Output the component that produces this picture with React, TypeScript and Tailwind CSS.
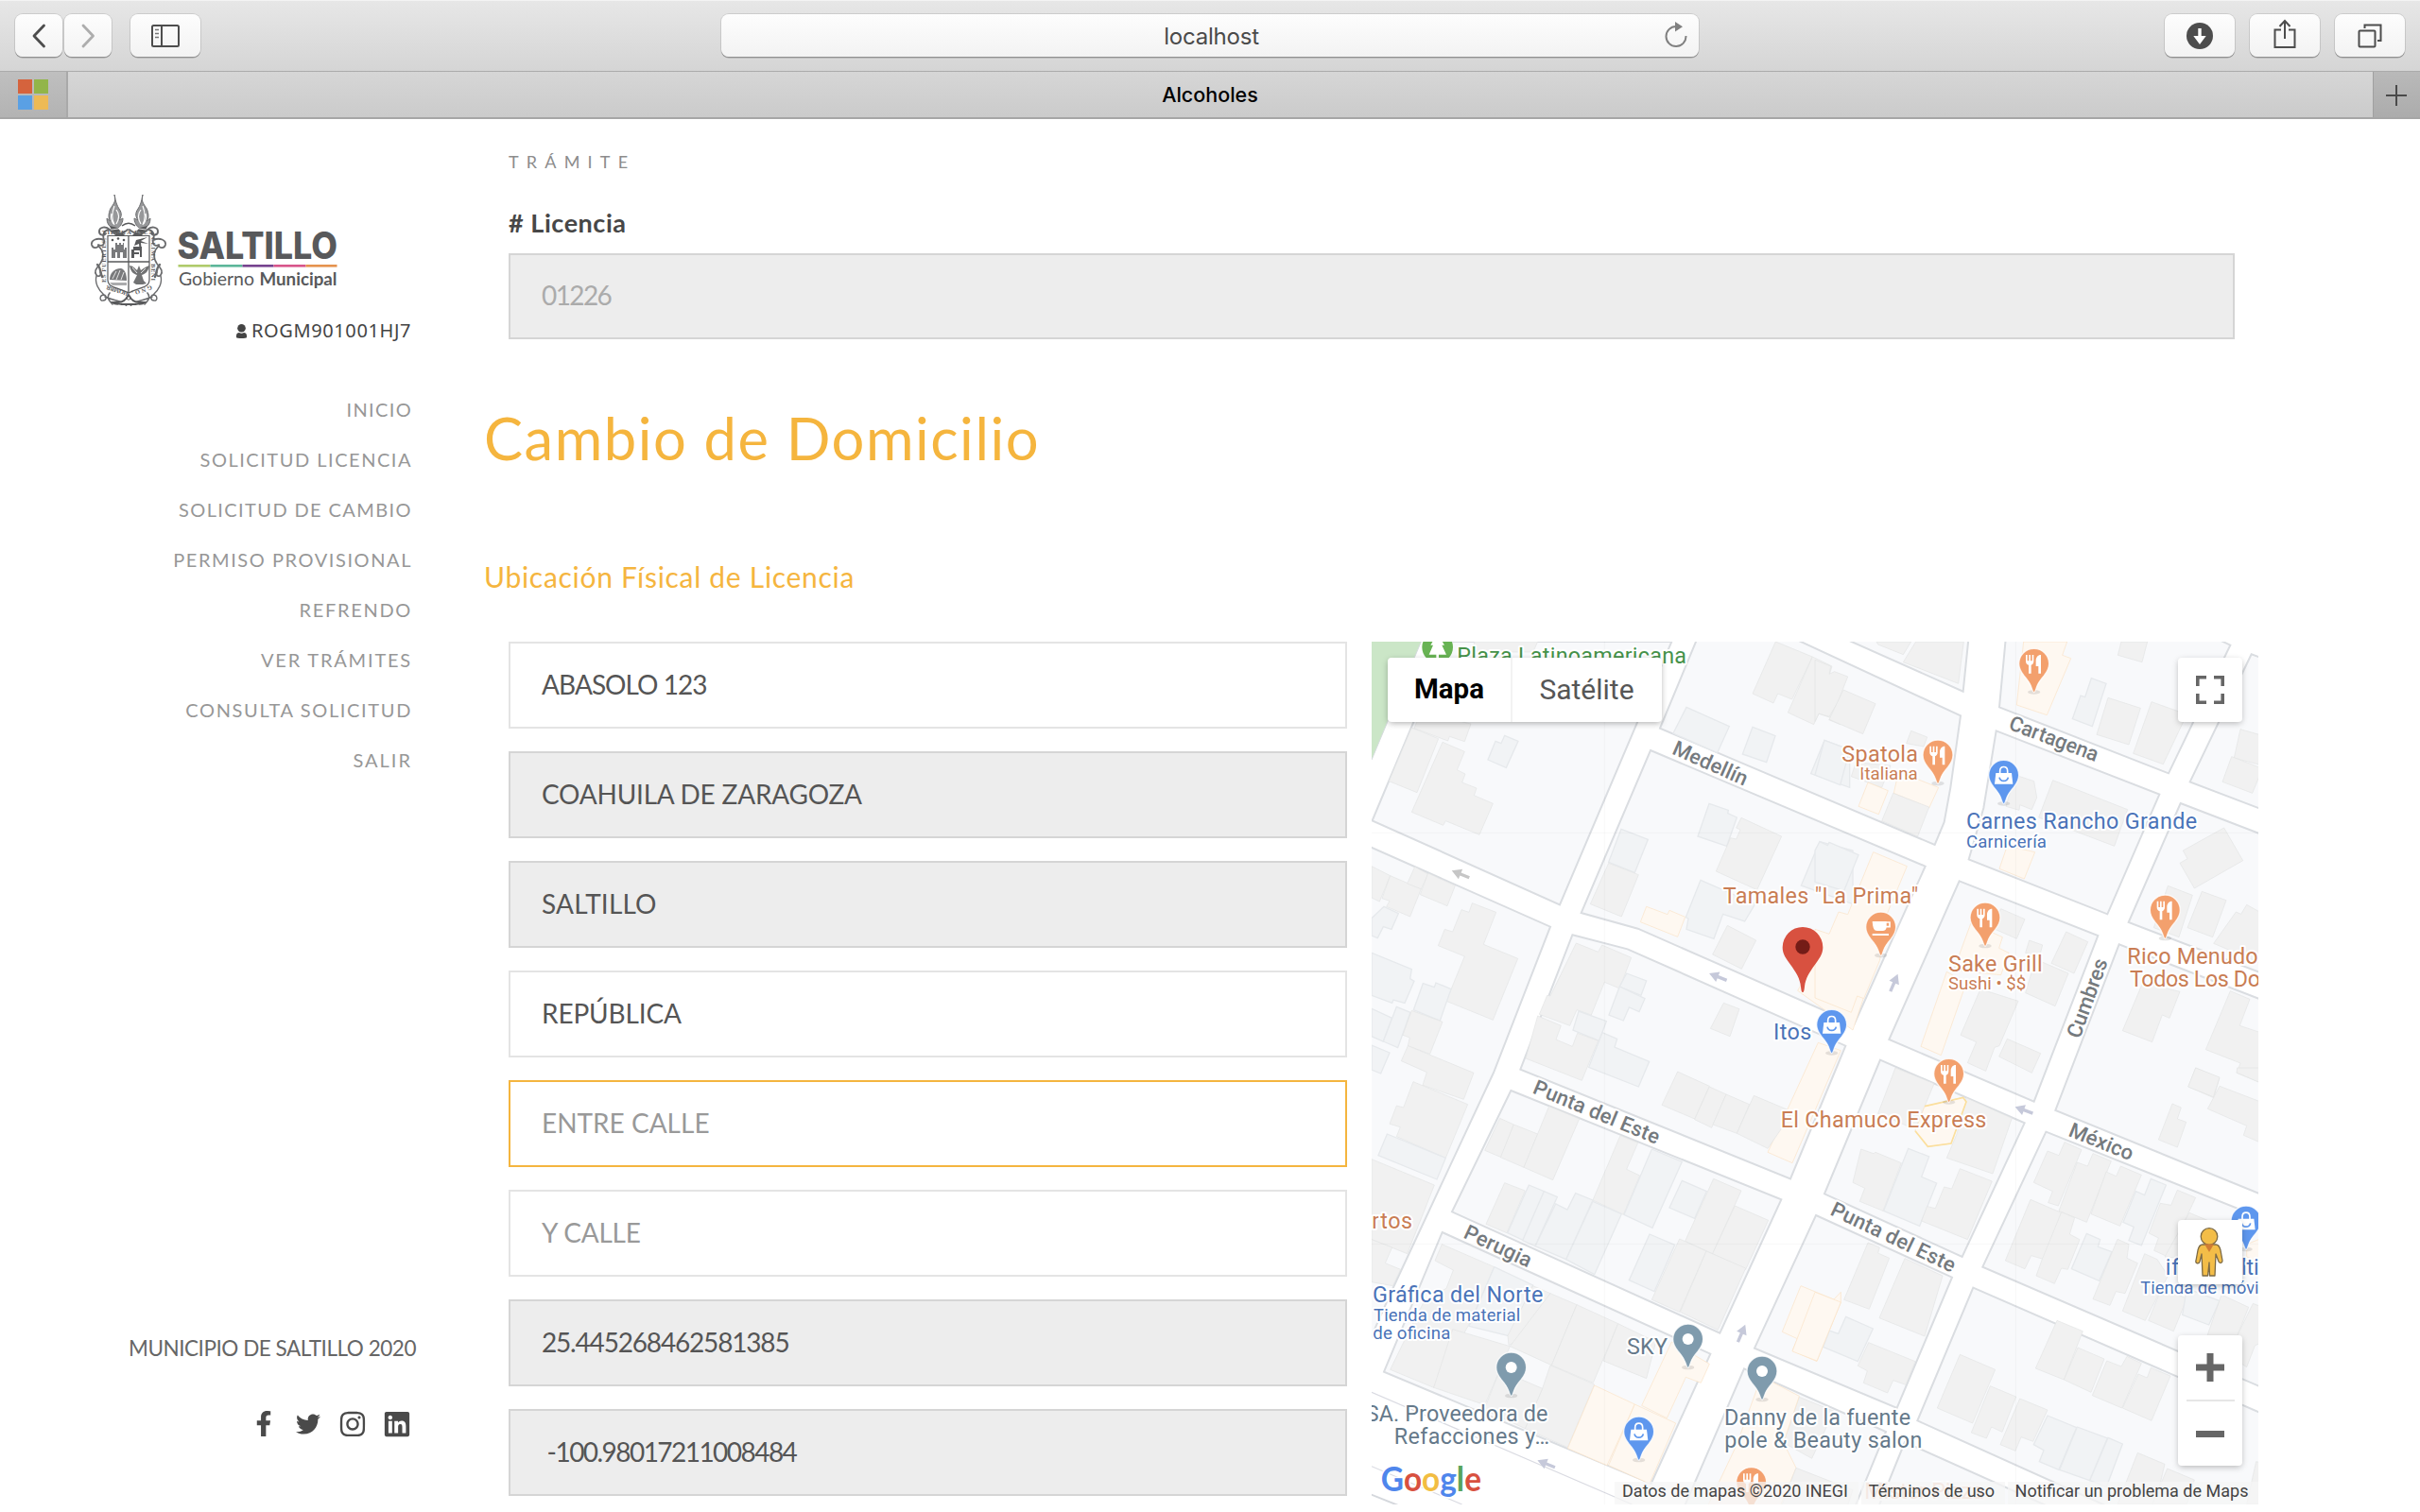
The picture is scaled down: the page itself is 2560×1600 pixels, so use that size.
import React from "react";
import { FaFacebookF, FaTwitter, FaInstagram, FaLinkedin } from "react-icons/fa";

/* ---------- Browser chrome ---------- */

const chromeButton =
  "flex h-[45px] items-center justify-center rounded-[8px] bg-gradient-to-b from-[#fdfdfd] to-[#f3f3f3] shadow-[0_0_0_1px_rgba(0,0,0,0.1),0_1.5px_0.5px_rgba(0,0,0,0.25)]";

function Toolbar() {
  return (
    <div className="flex h-[76px] items-start border-b border-[#ababab] bg-gradient-to-b from-[#e7e7e7] to-[#d5d5d5] px-4 pt-[15px] shadow-[inset_0_1px_0_#f4f4f4]">
      <div className="flex gap-[2px]">
        <button className={`${chromeButton} w-[50px]`}>
          <svg width="18" height="26" viewBox="0 0 18 26" fill="none" stroke="#4d4d4d" strokeWidth="2.800" strokeLinecap="round" strokeLinejoin="round">
            <path d="M14.500 2 4 13l10.500 11" />
          </svg>
        </button>
        <button className={`${chromeButton} w-[50px]`}>
          <svg width="18" height="26" viewBox="0 0 18 26" fill="none" stroke="#adadad" strokeWidth="2.800" strokeLinecap="round" strokeLinejoin="round">
            <path d="M4 2l10.500 11L4 24" />
          </svg>
        </button>
      </div>
      <button className={`${chromeButton} ml-[20px] w-[74px]`}>
        <svg width="30" height="24" viewBox="0 0 30 24" fill="none" stroke="#4d4d4d" strokeWidth="2">
          <rect x="1" y="1" width="28" height="22" rx="1.5" />
          <path d="M11 1v22" />
          <path d="M4 5.500h4M4 9.500h4M4 13.500h4" stroke="#777" strokeWidth="1.600" />
        </svg>
      </button>
      <div className={`${chromeButton} relative ml-[551px] w-[1034px]`}>
        <span className="pl-[3px] pt-[2px] font-['Inter',sans-serif] text-[24px] leading-[45px] tracking-[-0.2px] text-[#4a4a4a]">localhost</span>
        <svg className="absolute right-[12px] top-[8px]" width="24" height="28" viewBox="0 0 24 28" fill="none">
          <path d="M12 5A10.500 10.500 0 1 0 22.500 15" stroke="#808080" strokeWidth="2" />
          <path d="M11 0v10.500l8-5.200z" fill="#808080" />
        </svg>
      </div>
      <div className="ml-auto flex gap-[16px]">
        <button className={`${chromeButton} w-[74px]`}>
          <svg width="28" height="28" viewBox="0 0 28 28">
            <circle cx="14" cy="14" r="14" fill="#4d4d4d" />
            <path d="M12.300 6h3.400v8h5L14 23 7.300 14h5z" fill="#fff" />
          </svg>
        </button>
        <button className={`${chromeButton} w-[74px]`}>
          <svg className="-mt-[3px]" width="24" height="32" viewBox="0 0 24 32" fill="none" stroke="#4d4d4d" strokeWidth="2">
            <path d="M8 11.500H1.500V30h21V11.500H16M12 21V2M6.500 8 12 2l5.500 6" />
          </svg>
        </button>
        <button className={`${chromeButton} w-[74px]`}>
          <svg width="26" height="26" viewBox="0 0 26 26" fill="none" stroke="#4d4d4d" strokeWidth="2">
            <rect x="1.500" y="7.500" width="17" height="17" rx="1" />
            <path d="M7.500 5V1.500h17v16.500H21" />
          </svg>
        </button>
      </div>
    </div>
  );
}

function TabBar() {
  return (
    <div className="flex h-[50px] border-b-2 border-[#a6a6a6]">
      <div className="flex w-[72px] items-center justify-center border-r-2 border-[#a9a9a9] bg-gradient-to-b from-[#bfbfbf] to-[#b3b3b3]">
        <div className="grid grid-cols-2 gap-[2px]">
          <div className="size-[15px] bg-[#d5633d]" />
          <div className="size-[15px] bg-[#92b549]" />
          <div className="size-[15px] bg-[#5aa0e4]" />
          <div className="size-[15px] bg-[#edba55]" />
        </div>
      </div>
      <div className="flex-1 bg-gradient-to-b from-[#d6d6d6] to-[#cbcbcb] pr-[22px] text-center font-['Inter',sans-serif] text-[21.500px] font-medium leading-[49px] text-black">
        Alcoholes
      </div>
      <div className="flex w-[50px] items-center justify-center border-l border-[#a0a0a0] bg-gradient-to-b from-[#b9b9b9] to-[#acacac] pr-[2px] pt-[2px]">
        <svg width="22" height="22" viewBox="0 0 22 22" stroke="#4a4a4a" strokeWidth="2">
          <path d="M11 0v22M0 11h22" />
        </svg>
      </div>
    </div>
  );
}

/* ---------- Sidebar ---------- */

function Torch() {
  return (
    <g>
      <path d="M0 0C3 9-4 12-5 17c-1 4-2 7 1 11l-4-3c0 5 2 8 5 10l6 1c4-3 6-7 6-11l-4 2c3-4 3-8 0-12-2-3-4-8-5-15z" fill="#97989a" stroke="#6c6d6f" strokeWidth="1" />
      <path d="M0 12c-3 8-3 13 0 20M2 16c4 5 3 10 0 15M-3 20c-1 4 0 8 2 11" fill="none" stroke="#fff" strokeWidth="1.200" />
      <path d="M-5 33l8 2 9 9-5 5-9-9z" fill="#58595b" />
      <path d="M-3 37l7-1M1 41l7-2" stroke="#fff" strokeWidth=".8" />
    </g>
  );
}

function ScrollSide() {
  return (
    <g fill="none" stroke="#6a6b6d" strokeLinecap="round">
      <path d="M40 37c-7 6-15 5-19 0-4-4-11-3-11 2 0 4 5 5 7 2" strokeWidth="2" />
      <path d="M20 37c-5 1-7 5-5 11 1 5-2 7-6 5M15 48C8 45 1 48 2 53c1 4 6 4 7 1" strokeWidth="1.800" />
      <path d="M9 54c6 6 6 13 2 19-4 5-7 8-4 12 2 3 6 0 4-3" strokeWidth="1.600" />
      <path d="M7 86c-2 7 2 15 8 20-5 0-5 7-1 6 4 0 4-5 1-6" strokeWidth="1.400" />
      <path d="M16 108c8 4 16 4 22 8 2 2-2 5-6 4M24 116c-5-5-6-8-3-12" strokeWidth="1.600" />
      <path d="M8 74c4 4 3 9 5 13" strokeWidth="2.400" />
    </g>
  );
}

function Crest() {
  return (
    <g>
      <g transform="translate(26 0)"><Torch /></g>
      <g transform="translate(56 0) scale(-1 1)"><Torch /></g>
      <path d="M34 33c5-4 9-4 14 0" fill="none" stroke="#58595b" strokeWidth="1.600" />
      <ScrollSide />
      <g transform="translate(82 0) scale(-1 1)"><ScrollSide /></g>
      <path d="M19 43.500H63V90c0 9-11 8-22 14-11-6-22-5-22-14z" fill="#fff" stroke="#58595b" strokeWidth="1.200" />
      <path d="M41 43.500V104M19 71h44" stroke="#58595b" strokeWidth="1.300" />
      <g fill="#58595b">
        <path d="M23 67V56h2v2h2v-7h2v2h2v-2h2v2h2v-2h1v7h1v-2h2v11h-4v-6h-3v6h-3v-6h-2v6z" opacity=".8" />
        <circle cx="24" cy="48" r="1.300" /><circle cx="30" cy="46.500" r="1.300" /><circle cx="36" cy="48" r="1.300" />
        <path d="M44 67v-9h2v-3h9v11h-2v-7h-6v2h5v2h-5v4z" />
        <path d="M49 48l12-3-7 4 8 3-8-1 1 10h-2l-1-9-5 2z" />
        <path d="M21 90c0-6 4-12 12-12 4 1 6 6 6 13z" opacity=".8" />
        <path d="M21 93h18v3H24z" opacity=".5" />
        <path d="M42 75c3 0 6 3 8 5l2-5 2 5c3-2 5-4 9-5-1 6-4 9-8 10l2 6 3 3-4 1h-7l-3-2 4-8c-4-1-7-4-8-10z" opacity=".85" />
      </g>
      <path d="M24 89l4-8M28 90l4-10M33 90l3-8M45 77l5 6M59 78l-5 5" stroke="#fff" strokeWidth=".8" />
      <g fill="#58595b" fontFamily="Liberation Serif, serif" fontWeight="700" fontSize="6.500">
        <text x="13" y="41.500" textLength="57">TIERRA RICA,</text>
        <text transform="translate(17 93) rotate(-90)" textLength="47">ES FUERTES,</text>
        <text transform="translate(65 45) rotate(90)" textLength="46">CLIMA BENI</text>
        <text transform="translate(65 96) rotate(162)" textLength="22">GNO,</text>
        <text transform="translate(41 103) rotate(197)" textLength="24">HOMBR</text>
      </g>
      <path d="M41 106c-2 4-5 8-11 8h-6c3 3 7 1 9 2h16c2-1 6 1 9-2h-6c-6 0-9-4-11-8z" fill="#fff" stroke="#58595b" strokeWidth="1.800" />
      <circle cx="41" cy="109" r="2.200" fill="none" stroke="#58595b" />
    </g>
  );
}

function Logo() {
  return (
    <svg className="block" width="276" height="118" viewBox="0 0 276 118">
      <Crest />
      <g fill="#58595b">
        <text x="92.500" y="67.500" fontFamily="Inter, sans-serif" fontWeight="800" fontSize="39" textLength="169.500" lengthAdjust="spacingAndGlyphs">SALTILLO</text>
        <text x="94" y="95.500" fontFamily="Lato, sans-serif" fontSize="19.500" textLength="80" lengthAdjust="spacingAndGlyphs">Gobierno</text>
        <text x="179.500" y="95.500" fontFamily="Lato, sans-serif" fontWeight="700" fontSize="19.500" textLength="82" lengthAdjust="spacingAndGlyphs">Municipal</text>
      </g>
      <rect x="93.500" y="74" width="34" height="2.600" fill="#afcb6b" />
      <rect x="127.500" y="74" width="34" height="2.600" fill="#5cb69a" />
      <rect x="161.500" y="74" width="33" height="2.600" fill="#76438f" />
      <rect x="194.500" y="74" width="34" height="2.600" fill="#d8558a" />
      <rect x="228.500" y="74" width="33" height="2.600" fill="#e5924e" />
    </svg>
  );
}

const navItems: [string, string][] = [
  ["INICIO", "tracking-[1.35px]"],
  ["SOLICITUD LICENCIA", "tracking-[1.52px]"],
  ["SOLICITUD DE CAMBIO", "tracking-[1.4px]"],
  ["PERMISO PROVISIONAL", "tracking-[1.57px]"],
  ["REFRENDO", "tracking-[1.7px]"],
  ["VER TRÁMITES", "tracking-[1.8px]"],
  ["CONSULTA SOLICITUD", "tracking-[1.64px]"],
  ["SALIR", "tracking-[2px]"],
];

function Sidebar() {
  return (
    <aside className="flex h-[1474px] w-[514px] flex-col pl-[95px] pt-[80px]">
      <Logo />
      <div className="mt-[11px] flex h-[30px] w-[340px] items-center justify-end gap-[5px] text-[#444]">
        <svg width="11" height="15" viewBox="0 0 11 15" fill="#444">
          <circle cx="5.500" cy="4.300" r="4.300" />
          <path d="M0 14v-2c0-2 1.500-3 3-3 1.500 1 3.500 1 5 0 1.500 0 3 1 3 3v2c0 1.300-11 1.300-11 0z" />
        </svg>
        <span className="font-['Noto_Sans',sans-serif] text-[20px] leading-[30px] tracking-[0.6px]">ROGM901001HJ7</span>
      </div>
      <nav className="mt-[42px] flex w-[341px] flex-col items-end">
        {navItems.map(([label, tracking]) => (
          <a key={label} className={`block h-[53px] whitespace-nowrap text-[20px] leading-[53px] text-[#979797] ${tracking}`}>
            {label}
          </a>
        ))}
      </nav>
      <div className="mt-auto w-[345px] whitespace-nowrap text-right text-[22.500px] leading-[32px] tracking-[-0.47px] text-[#666]">
        MUNICIPIO DE SALTILLO 2020
      </div>
      <div className="mb-[78px] mt-[48px] flex h-[31px] w-[348px] items-center justify-end text-[#4a4a4a]">
        <div className="flex w-[47px] justify-center"><FaFacebookF className="h-[27px] w-[20px]" /></div>
        <div className="flex w-[47px] justify-center"><FaTwitter className="size-[26px]" /></div>
        <div className="flex w-[47px] justify-center"><FaInstagram className="size-[30px]" /></div>
        <div className="flex w-[47px] justify-center"><FaLinkedin className="size-[30px]" /></div>
      </div>
    </aside>
  );
}

/* ---------- Map ---------- */

type Kind = "g" | "b" | "c";
const kindStyle: Record<Kind, [string, string]> = {
  g: ["#f1f1f1", "#e3e4e4"],
  b: ["#f1f3f5", "#e6e9ec"],
  c: ["#fef8f1", "#fbe2c6"],
};

const blocks = [
  "35,595 273,27 985,27 630,862",
  "1065,20 948,302 1820,672 1850,600 1870,490 1902,262 1380,20",
  "1540,20 1910,185 1927,20",
  "2045,20 2025,235 2562,445 2758,38 2720,20",
  "2860,80 2825,67 2630,472 2860,560",
  "2015,310 2533,512 2368,892 1928,718 1975,555",
  "2600,540 2860,640 2860,1080 2435,918",
  "918,372 1790,740 1565,1240 878,938 698,888",
  "1898,787 2338,960 2135,1487 1675,1290",
  "2405,988 2203,1515 2860,1783 2860,1165",
  "670,958 845,1003 1537,1310 1362,1732 505,1385",
  "20,675 600,932 420,1395 98,2085 20,2260",
  "475,1452 1333,1798 1138,2222 288,1837",
  "257,1902 1108,2288 920,2700 72,2345",
  "1647,1355 2105,1555 1907,1980 1470,1780",
  "1443,1848 1875,2045 1700,2460 1248,2270",
  "2173,1583 2860,1858 2860,2395 1972,2012",
  "1942,2078 2860,2478 2860,2800 2430,2800 1765,2500",
  "1725,2568 1635,2790 2220,2790",
  "1215,2335 1665,2535 1560,2790 1018,2790",
];

const buildings: { dx: number; dy: number; items: [Kind, string][] }[] = [
  {
    dx: 0,
    dy: 0,
    items: [
      ["g", "190,250 348,288 328,344 280,328 275,342 168,302"],
      ["g", "160,300 245,335 177,506 88,470"],
      ["g", "258,346 328,376 304,434 330,447 320,474 366,492 358,515 418,541 375,640 268,596 260,610 160,568"],
      ["b", "455,325 498,343 460,427 402,402 426,343 444,350"],
      ["g", "360,27 560,27 545,60 350,60"],
      ["g", "1315,27 1432,75 1367,210 1322,192 1308,222 1242,192"],
      ["g", "1432,75 1494,105 1487,128 1520,145 1520,290 1484,275 1495,270 1452,256 1436,290 1354,252"],
      ["b", "1032,235 1168,296 1130,380 990,318"],
      ["b", "1242,298 1314,326 1286,410 1210,384"],
      ["b", "1470,340 1550,370 1550,490 1427,446"],
      ["b", "1104,541 1165,562 1163,572 1192,585 1160,676 1068,645"],
      ["g", "1206,586 1334,645 1256,815 1126,756 1172,650 1190,654 1203,624 1190,618"],
      ["b", "1455,662 1560,690 1560,860 1396,801"],
      ["b", "825,622 910,655 868,760 785,727"],
      ["g", "785,730 880,767 826,900 727,860"],
      ["c", "905,868 972,893 978,880 1028,901 1004,964 886,917"],
      ["b", "1077,784 1250,860 1217,915 1148,892 1119,970 1032,940 1038,906 1030,902"],
      ["g", "1162,928 1253,975 1207,1066 1115,1020"],
      ["g", "1150,1174 1200,1193 1170,1280 1108,1255"],
      ["g", "33,740 92,770 58,852 33,840"],
      ["g", "92,770 190,812 155,900 80,868 90,850 66,842"],
      ["g", "170,742 212,765 190,812 146,795"],
      ["g", "212,762 298,802 273,866 187,830"],
      ["b", "72,868 118,890 96,940 70,932 52,968 33,960 33,905"],
      ["g", "352,857 428,886 388,988 497,1033 418,1228 270,1168 328,1026 244,992 265,940 290,948 318,878 342,886"],
      ["b", "33,1015 160,1067 155,1097 168,1105 138,1174 102,1164 98,1174 33,1150"],
      ["b", "237,1110 285,1130 250,1230 166,1196 196,1112 232,1124"],
      ["b", "33,1192 98,1222 70,1296 33,1280"],
      ["b", "112,1186 156,1204 116,1316 70,1296"],
      ["g", "160,1198 258,1234 218,1336 148,1310 154,1284 132,1276"],
      ["b", "33,1308 90,1332 62,1398 33,1386"],
      ["g", "148,1310 357,1396 325,1480 195,1435 208,1394 127,1358"],
      ["g", "682,984 752,1012 764,990 857,1030 820,1128 772,1108 730,1212 684,1196 662,1246 565,1210 590,1150 600,1152"],
      ["b", "842,1080 905,1104 888,1150 820,1122"],
      ["b", "820,1122 900,1160 882,1202 850,1188 832,1230 786,1212"],
      ["b", "690,1200 778,1232 755,1294 672,1260"],
      ["g", "560,1215 634,1246 618,1290 670,1312 686,1270 752,1294 700,1420 522,1350"],
      ["b", "765,1268 812,1288 804,1314 914,1360 880,1440 722,1378"],
      ["c", "1500,930 1640,1020 1560,1260 1385,1135"],
    ],
  },
  {
    dx: 1440,
    dy: 0,
    items: [
      ["g", "195,27 305,27 280,68 200,36"],
      ["g", "320,27 472,27 455,160 280,92"],
      ["g", "0,85 50,105 45,130 62,122 104,138 72,220 45,265 12,255 0,280"],
      ["g", "90,180 192,224 152,320 45,274"],
      ["b", "30,340 110,370 80,482 0,450"],
      ["g", "305,310 356,330 345,360 290,350"],
      ["g", "130,410 240,420 212,490 115,455"],
      ["c", "168,474 232,500 202,575 138,550"],
      ["c", "265,440 392,490 362,555 250,508"],
      ["g", "248,508 362,552 326,645 212,596"],
      ["c", "662,27 800,27 785,70 812,80 736,260 640,228"],
      ["g", "972,27 1055,27 1038,92 961,70"],
      ["b", "877,143 924,160 880,296 817,272 843,198 857,203"],
      ["g", "930,205 1033,238 996,354 894,322"],
      ["g", "1068,218 1180,258 1105,416 1010,382"],
      ["g", "1350,305 1420,325 1420,420 1330,396"],
      ["g", "1322,392 1420,430 1388,508 1293,472"],
      ["g", "635,450 695,470 704,522 688,560 650,545 648,562 606,550"],
      ["g", "755,467 992,560 950,676 710,585"],
      ["c", "610,675 698,695 664,780 585,748"],
      ["g", "1298,618 1358,722 1204,810 1158,730 1182,716 1168,690"],
      ["g", "1120,802 1198,832 1155,965 1075,935"],
      ["g", "1228,820 1305,848 1262,965 1182,935"],
      ["g", "1370,862 1420,890 1420,1050 1265,985 1336,885 1352,892"],
      ["b", "15,662 40,674 45,664 138,704 92,818 0,790 0,690"],
      ["c", "185,695 292,740 225,900 215,985 205,1040 155,1160 134,1152 115,1204 0,1158 0,940 45,955 75,885 104,893"],
      ["g", "590,875 666,908 640,970 560,935"],
      ["c", "495,920 595,965 584,1000 615,1015 590,1085 440,1070"],
      ["g", "680,975 722,990 712,1030 668,1015"],
      ["g", "797,948 866,980 822,1080 750,1048"],
      ["g", "700,1035 804,1080 762,1184 668,1142"],
      ["g", "525,1130 645,1168 585,1310 570,1315 542,1390 484,1364 512,1298 462,1276"],
      ["c", "418,1075 480,1110 400,1340 336,1312"],
      ["g", "610,1288 716,1334 688,1396 584,1344"],
      ["g", "1040,1110 1158,1138 1125,1222 1102,1212 1070,1298 976,1262"],
      ["g", "1318,1136 1380,1162 1348,1246 1420,1270 1420,1430 1338,1396 1350,1365 1240,1322"],
      ["g", "1208,1380 1284,1412 1265,1475 1185,1440"],
      ["c", "10,1300 82,1325 -72,1682 -150,1648"],
    ],
  },
  {
    dx: 0,
    dy: 1380,
    items: [
      ["g", "165,44 338,116 268,286 112,218 124,188 90,178 112,120 134,126"],
      ["b", "82,210 268,286 240,354 54,278"],
      ["g", "33,290 232,372 146,590 33,545"],
      ["g", "33,545 98,570 76,620 125,640 100,692 33,680"],
      ["g", "440,160 484,180 444,284 392,262"],
      ["g", "484,180 560,210 516,316 442,284"],
      ["g", "596,122 692,162 608,356 516,316"],
      ["g", "822,215 878,238 842,322 884,342 832,466 735,420"],
      ["b", "922,258 1018,298 924,508 834,466"],
      ["g", "455,365 520,390 462,524 396,496"],
      ["b", "532,372 580,392 520,550 464,524"],
      ["b", "580,392 622,410 552,566 512,548"],
      ["b", "680,398 735,420 650,608 552,566 617,432 654,450"],
      ["b", "735,424 826,464 740,656 650,608"],
      ["b", "1018,358 1096,392 1058,478 978,444"],
      ["g", "1118,352 1206,390 1115,590 1028,550"],
      ["g", "1186,438 1292,484 1220,640 1115,590"],
      ["b", "915,528 995,562 930,710 850,674"],
      ["g", "1010,543 1095,582 1010,775 922,736"],
      ["g", "1095,582 1220,636 1132,832 1012,775"],
      ["g", "1004,12 1105,58 1058,162 954,118"],
      ["g", "1105,60 1158,84 1112,190 1058,164"],
      ["g", "1158,84 1232,116 1192,208 1116,180"],
      ["g", "1246,88 1370,140 1290,256 1192,208"],
      ["g", "256,560 422,632 350,800 230,1015 92,958 130,880 200,740 270,700 292,642 234,612"],
      ["b", "422,632 545,690 472,852 342,820"],
      ["g", "545,692 600,716 540,850 468,880 465,850"],
      ["g", "600,716 684,752 604,944 472,884"],
      ["g", "684,752 815,812 736,1000 604,944"],
      ["g", "815,812 935,870 905,986 768,930"],
      ["g", "290,830 472,884 392,1070 230,1015"],
      ["g", "600,944 740,1005 655,1205 520,1145 575,1018"],
      ["g", "440,960 575,1018 520,1145 390,1085"],
      ["c", "740,1008 868,1068 780,1262 655,1208"],
      ["c", "868,1068 998,1128 915,1320 785,1262"],
      ["c", "985,870 1105,940 1078,1000 1030,982 970,1112 890,1072"],
      ["c", "1395,692 1500,735 1522,712 1522,745 1446,932 1368,898 1384,860 1336,838"],
      ["g", "1390,1045 1500,1090 1430,1240 1340,1190"],
      ["c", "1270,980 1390,1042 1340,1190 1380,1270 1330,1390 1100,1390 1190,1200"],
      ["g", "1380,1270 1560,1340 1540,1400 1330,1400"],
    ],
  },
  {
    dx: 1440,
    dy: 1380,
    items: [
      ["g", "255,0 378,50 318,195 200,145"],
      ["g", "480,95 625,160 564,336 418,286 450,210"],
      ["c", "348,122 470,94 480,108 432,240 358,250 318,200"],
      ["g", "146,258 186,272 192,268 274,302 216,454 142,424 158,382 120,364"],
      ["b", "296,256 362,282 338,346 386,366 332,502 218,454"],
      ["g", "460,320 562,360 484,545 338,486 356,440 382,446 410,378 434,384"],
      ["g", "168,555 205,570 200,588 236,604 172,766 92,736"],
      ["g", "285,605 405,660 348,852 204,794"],
      ["b", "98,790 184,828 136,932 26,886 46,834 74,844"],
      ["g", "170,872 318,932 288,1006 248,992 230,1032 154,1000 166,962 136,946"],
      ["c", "0,712 82,744 6,930 -72,900"],
      ["g", "792,236 846,260 772,438 740,428 754,392 694,364 738,264 774,278"],
      ["g", "882,272 940,296 862,490 774,454 832,300 865,312"],
      ["g", "970,312 1036,340 968,502 876,464 924,330 956,344"],
      ["b", "1066,352 1114,372 1036,564 996,548 1012,505 978,490 1018,392 1046,404"],
      ["g", "1150,388 1208,412 1120,600 1076,580 1090,540 1060,525 1096,430 1130,436"],
      ["g", "1188,460 1260,490 1240,610 1110,600"],
      ["g", "684,418 782,460 734,610 686,596 666,638 604,612"],
      ["g", "782,458 824,476 808,528 840,545 802,640 782,636 760,685 702,660 720,610"],
      ["b", "862,526 905,545 898,568 942,584 902,676 814,638"],
      ["g", "960,544 996,560 990,604 1024,620 984,716 955,710 936,754 882,734"],
      ["g", "1046,590 1086,608 1120,660 1048,802 976,772"],
      ["g", "1100,700 1180,732 1138,836 1058,802"],
      ["b", "1180,700 1284,740 1250,816 1166,784"],
      ["g", "1290,720 1376,760 1340,850 1245,850"],
      ["g", "1390,748 1420,760 1420,870 1396,882 1370,950 1340,930 1340,850"],
      ["g", "768,802 850,836 790,990 700,954"],
      ["g", "834,888 918,924 876,1030 790,990"],
      ["g", "990,916 1036,938 974,1080 880,1040 926,930 972,948"],
      ["g", "1066,952 1128,978 1068,1120 976,1080 1026,972 1054,984"],
      ["g", "460,910 572,958 500,1128 388,1080"],
      ["g", "556,1010 638,1044 594,1156 560,1140 544,1176 496,1158"],
      ["g", "650,1050 738,1086 692,1186 654,1172 636,1216 588,1196"],
      ["b", "738,1104 830,1142 774,1276 712,1250 726,1214 694,1196"],
      ["b", "832,1140 928,1176 872,1310 776,1276"],
      ["b", "930,1174 976,1194 925,1330 872,1310"],
      ["g", "1024,1222 1110,1258 1080,1385 960,1385"],
      ["g", "1118,1272 1204,1308 1180,1385 1070,1385"],
      ["g", "1400,1250 1420,1255 1420,1385 1370,1385"],
      ["g", "1208,0 1284,30 1264,92 1184,60"],
      ["g", "1284,58 1420,110 1420,240 1360,214 1370,184 1246,130"],
      ["g", "1340,0 1420,0 1420,50 1338,15"],
      ["g", "1134,114 1162,126 1150,162 1178,172 1150,252 1090,228"],
      ["c", "1370,560 1420,540 1420,620 1370,600"],
    ],
  },
];

function PoiPin({ x, y, color, icon }: { x: number; y: number; color: string; icon: "food" | "bag" | "cup" | "dot" }) {
  return (
    <g transform={`translate(${x} ${y})`}>
      <ellipse cx="0" cy="90" rx="20" ry="7" fill="#000" opacity=".1" />
      <path d="M0 91C-3 91-5 85-8 76-13 60-20 52-32 38-41 27-48 15-48 0a48 48 0 0 1 96 0c0 15-7 27-16 38C20 52 13 60 8 76 5 85 3 91 0 91z" fill={color} stroke="#fff" strokeWidth="4" strokeOpacity=".8" />
      {icon === "food" && (
        <g fill="#fff">
          <path d="M-26-28h5v19h5v-19h5v19h5v-19h5V-8c0 7-4 10-8 12v27h-8V4c-5-2-9-5-9-12z" />
          <path d="M22-28v59h-8V8H6v-18c0-10 6-18 16-18z" />
        </g>
      )}
      {icon === "bag" && (
        <g fill="none" stroke="#fff">
          <path d="M-25-7h50l4 35h-58z" fill="#fff" stroke="none" />
          <path d="M-12-5v-8c0-18 24-18 24 0v8" strokeWidth="5" />
          <path d="M-14 7c3 15 25 15 28 0" stroke={color} strokeWidth="5" />
        </g>
      )}
      {icon === "cup" && (
        <g fill="none" stroke="#fff">
          <path d="M-27-18h45V0C18 8 12 12 6 12h-18c-10 0-13-8-15-30z" fill="#fff" stroke="none" />
          <path d="M14-15h14v14H14" strokeWidth="5" />
          <path d="M-27 24h52" strokeWidth="6" />
        </g>
      )}
      {icon === "dot" && <circle r="18" fill="#fff" />}
    </g>
  );
}

const ORANGE = "#f3a06d";
const BLUE = "#5e97ee";
const SLATE = "#7f9bad";
const T_ORANGE = "#c97d54";
const T_BLUE = "#4a73b8";
const T_SLATE = "#65798a";

const labels: [string, number, number, number, number, string][] = [
  ["Plaza Latinoamericana", 304, 96, 70, 728, "#46924a"],
  ["Spatola", 1525, 407, 70, 242, T_ORANGE],
  ["Italiana", 1582, 466, 56, 184, T_ORANGE],
  ["Carnes Rancho Grande", 1920, 621, 70, 732, T_BLUE],
  ["Carnicería", 1920, 681, 56, 255, T_BLUE],
  ['Tamales "La Prima"', 1148, 858, 70, 620, T_ORANGE],
  ["Sake Grill", 1863, 1073, 70, 299, T_ORANGE],
  ["Sushi • $$", 1863, 1131, 56, 247, T_ORANGE],
  ["Rico Menudo", 2431, 1049, 70, 415, T_ORANGE],
  ["Todos Los Dom", 2439, 1121, 70, 474, T_ORANGE],
  ["Itos", 1308, 1291, 70, 121, T_BLUE],
  ["El Chamuco Express", 1331, 1569, 70, 653, T_ORANGE],
  ["rtos", 34, 1890, 70, 128, T_ORANGE],
  ["Gráfica del Norte", 36, 2125, 70, 541, T_BLUE],
  ["Tienda de material", 39, 2184, 56, 466, T_BLUE],
  ["de oficina", 37, 2240, 56, 246, T_BLUE],
  ["SKY", 843, 2288, 70, 129, T_SLATE],
  ["SA. Proveedora de", 14, 2501, 70, 578, T_SLATE],
  ["Refacciones y…", 104, 2573, 70, 493, T_SLATE],
  ["Danny de la fuente", 1152, 2513, 70, 591, T_SLATE],
  ["pole & Beauty salon", 1153, 2585, 70, 627, T_SLATE],
  ["ifix Mu", 2552, 2036, 70, 225, T_BLUE],
  ["lti", 2793, 2036, 70, 56, T_BLUE],
  ["Tienda de móvi", 2473, 2096, 56, 376, T_BLUE],
];

const streets: [string, number, number, number, number][] = [
  ["Medellín", 983, 382, 24, 254],
  ["Cartagena", 2051, 304, 20.500, 298],
  ["Cumbres", 2280, 1290, -70, 263],
  ["Punta del Este", 541, 1459, 22.500, 428],
  ["Perugia", 321, 1918, 25, 229],
  ["Punta del Este", 1485, 1845, 25.500, 430],
  ["México", 2241, 1595, 22, 215],
];

function Arrow({ x, y, r, c }: { x: number; y: number; r: number; c: string }) {
  return <path transform={`translate(${x} ${y}) rotate(${r})`} d="M-30 0 0-17 0-5 30-5 30 5 0 5 0 17z" fill={c} />;
}

function MapCanvas() {
  return (
    <svg className="block" width="938" height="913" viewBox="33 27 2814 2739" preserveAspectRatio="none">
      <rect x="33" y="27" width="2814" height="2739" fill="#fff" />
      <path d="M20 20H193L33 402H20z" fill="#cbe6c7" stroke="#d5dbdd" strokeWidth="3" />
      <g fill="#f8f9fb" stroke="#dadde1" strokeWidth="6">
        {blocks.map((p) => <polygon key={p} points={p} />)}
      </g>
      <path d="M33 2410 860 2766M33 2645 320 2766" fill="none" stroke="#dadbe2" strokeWidth="3.500" />
      <path d="M20 2730 120 2770" stroke="#d5d8dd" strokeWidth="6" />
      {buildings.map((g, i) => (
        <g key={i} transform={`translate(${g.dx} ${g.dy})`}>
          {g.items.map(([k, p]) => (
            <polygon key={p} points={p} fill={kindStyle[k][0]} stroke={kindStyle[k][1]} strokeWidth={k === "b" ? 4 : 2} />
          ))}
        </g>
      ))}
      <path d="M1788 1502 1910 1474 1920 1488 1872 1620 1798 1630 1758 1580" fill="none" stroke="#fbdf9d" strokeWidth="5" />
      <path d="M772 27V2766M2077 27V2766M33 634H2847M33 1939H2847" stroke="#000" strokeOpacity=".03" strokeWidth="3" />
      <Arrow x={315} y={765} r={22} c="#c6c6c6" />
      <Arrow x={1132} y={1091} r={22} c="#c6c9da" />
      <Arrow x={1691} y={1110} r={113} c="#c6c9da" />
      <Arrow x={2103} y={1514} r={20} c="#c6c9da" />
      <Arrow x={1207} y={2223} r={113} c="#c6c9da" />
      <Arrow x={587} y={2637} r={22} c="#c6c9da" />

      <circle cx="242" cy="45" r="49" fill="#68b354" />
      <path d="M242 0 264 38H256L270 68H246V78H238V68H215L228 38H220z" fill="#fff" />

      <g fontFamily="Roboto, sans-serif" stroke="#fff" strokeWidth="12" strokeLinejoin="round" paintOrder="stroke">
        {streets.map(([t, x, y, r, len]) => (
          <text key={`${t}${x}`} transform={`translate(${x} ${y}) rotate(${r})`} fontSize="66" fontWeight="500" fill="#757a7e" textLength={len}>{t}</text>
        ))}
        {labels.map(([t, x, y, size, len, fill]) => (
          <text key={`${t}${x}`} x={x} y={y} fontSize={size} fill={fill} textLength={len}>{t}</text>
        ))}
        <text x="1597" y="2748" fontSize="70" fill="#f0c3ac" textLength="380">Mister Pizza</text>
      </g>

      <PoiPin x={2135} y={97} color={ORANGE} icon="food" />
      <PoiPin x={1830} y={387} color={ORANGE} icon="food" />
      <PoiPin x={2039} y={451} color={BLUE} icon="bag" />
      <PoiPin x={1649} y={933} color={ORANGE} icon="cup" />
      <PoiPin x={1980} y={903} color={ORANGE} icon="food" />
      <PoiPin x={2551} y={879} color={ORANGE} icon="food" />
      <PoiPin x={1493} y={1243} color={BLUE} icon="bag" />
      <PoiPin x={1865} y={1399} color={ORANGE} icon="food" />
      <PoiPin x={2808} y={1866} color={BLUE} icon="bag" />
      <PoiPin x={1037} y={2241} color={SLATE} icon="dot" />
      <PoiPin x={476} y={2331} color={SLATE} icon="dot" />
      <PoiPin x={1272} y={2343} color={SLATE} icon="dot" />
      <PoiPin x={881} y={2535} color={BLUE} icon="bag" />
      <PoiPin x={1238} y={2696} color={ORANGE} icon="food" />

      <path d="M1401 1140c-4 0-5-8-6-18-3-26-14-43-34-71-16-22-24-34-24-54a64 64 0 0 1 128 0c0 20-8 32-24 54-20 28-31 45-34 71-1 10-2 18-6 18z" fill="#d85140" />
      <circle cx="1401" cy="996" r="23" fill="#741c17" />

      <text x="62" y="2725" fontFamily="Lato, sans-serif" fontSize="106" fontWeight="700" textLength="319" lengthAdjust="spacingAndGlyphs" stroke="#fff" strokeWidth="10" paintOrder="stroke">
        <tspan fill="#4f86ec">G</tspan>
        <tspan fill="#d85140">o</tspan>
        <tspan fill="#f2bd42">o</tspan>
        <tspan fill="#4f86ec">g</tspan>
        <tspan fill="#58a55c">l</tspan>
        <tspan fill="#d85140">e</tspan>
      </text>
    </svg>
  );
}

function Pegman() {
  return (
    <svg width="30" height="52" viewBox="0 0 30 52">
      <g fill="#f3bd48" stroke="#7c6a45" strokeWidth="1.300" strokeLinejoin="round">
        <path d="M8 18h14c3 0 4 2 5 6l2 11c0 3-3 3-4 1l-3-8-1 23h-5.500L15 37l-1.500 14H8L7 28l-2 8c-1 3-5 2-4-1l2-11c1-4 2-6 5-6z" />
        <circle cx="15" cy="9.500" r="8.800" />
      </g>
      <path d="M10 17.500h10L15 26z" fill="#d07c35" />
    </svg>
  );
}

const control = "absolute left-[853px] w-[68px] rounded-[4px] bg-white shadow-[0_2px_7px_-1px_rgba(0,0,0,0.3)]";

function MapPanel() {
  return (
    <div className="relative h-[913px] w-[938px] overflow-hidden font-['Roboto',sans-serif]">
      <MapCanvas />
      <div className="absolute left-[17px] top-[17px] flex h-[68px] rounded-[4px] bg-white leading-[67px] shadow-[0_2px_7px_-1px_rgba(0,0,0,0.35)]">
        <div className="w-[132px] border-r-2 border-[#f3f3f3] text-center text-[29.500px] font-bold text-black">Mapa</div>
        <div className="w-[158px] pr-px text-center text-[30px] text-[#565656]">Satélite</div>
      </div>
      <div className={`${control} top-[17px] flex h-[68px] items-center justify-center`}>
        <svg width="30" height="30" viewBox="0 0 30 30" fill="none" stroke="#666" strokeWidth="3.600">
          <path d="M1.800 11V1.800H11M19 1.800h9.200V11M28.200 19v9.200H19M11 28.200H1.800V19" />
        </svg>
      </div>
      <div className={`${control} top-[612px] flex h-[68px] items-center justify-center pr-[2px]`}>
        <Pegman />
      </div>
      <div className={`${control} top-[734px] flex h-[138px] flex-col items-center`}>
        <div className="flex h-[68px] items-center">
          <svg width="30" height="30" viewBox="0 0 30 30" stroke="#666" strokeWidth="7"><path d="M15 0v30M0 15h30" /></svg>
        </div>
        <div className="h-[2px] w-[51px] bg-[#e6e6e6]" />
        <div className="flex h-[68px] items-center">
          <svg width="30" height="7" viewBox="0 0 30 7"><rect width="30" height="7" fill="#666" /></svg>
        </div>
      </div>
      <div className="absolute bottom-0 right-0 flex h-[24px] gap-[3px] whitespace-nowrap text-[18px] leading-[19px] text-[#444]">
        <div className="w-[258px] bg-[#f5f5f5]/75 pr-[3px] text-center">Datos de mapas ©2020 INEGI</div>
        <div className="w-[152px] bg-[#f5f5f5]/75 pr-[3px] text-center">Términos de uso</div>
        <div className="w-[265px] bg-[#f5f5f5]/75 pr-[3px] text-center">Notificar un problema de Maps</div>
      </div>
    </div>
  );
}

/* ---------- Form ---------- */

type FieldProps = {
  text: string;
  variant: "plain" | "locked" | "active";
  tone?: string;
  tracking?: string;
  size?: string;
};

function Field({ text, variant, tone = "text-[#555]", tracking = "tracking-normal", size = "h-[92px]" }: FieldProps) {
  const look = {
    plain: "border-[#e4e4e4] bg-white",
    locked: "border-[#d5d5d5] bg-[#ededed]",
    active: "border-[#f4b53f] bg-white",
  }[variant];
  return (
    <div className={`flex items-center whitespace-pre border-2 pb-[3px] pl-[33px] text-[28px] leading-[40px] ${look} ${tone} ${tracking} ${size}`}>
      {text}
    </div>
  );
}

function MainContent() {
  return (
    <main className="flex h-[1474px] flex-1 flex-col pt-[30px]">
      <div className="ml-[24px] text-[18px] leading-[30px] tracking-[8.2px] text-[#8c8c8c]">TRÁMITE</div>
      <label className="ml-[24px] mt-[33px] text-[27px] font-bold leading-[34px] tracking-[0.55px] text-[#474747]"># Licencia</label>
      <div className="ml-[24px] mt-[15px] w-[1826px]">
        <Field text="01226" variant="locked" tone="text-[#ababab]" tracking="tracking-[-1.6px]" size="h-[91px]" />
      </div>
      <h1 className="-ml-[2px] mt-[64px] text-[61.500px] leading-[80px] tracking-[1.5px] text-[#f5b53e]">Cambio de Domicilio</h1>
      <h2 className="-ml-[2px] mt-[87px] text-[30px] leading-[40px] tracking-[0.7px] text-[#f5b53e]">Ubicación Físical de Licencia</h2>
      <div className="ml-[24px] mt-[49px] flex gap-[26px]">
        <div className="flex w-[887px] flex-col gap-6">
          <Field text="ABASOLO 123" variant="plain" tracking="tracking-[-0.95px]" />
          <Field text="COAHUILA DE ZARAGOZA" variant="locked" tracking="tracking-[-0.22px]" />
          <Field text="SALTILLO" variant="locked" tracking="tracking-[0.2px]" />
          <Field text="REPÚBLICA" variant="plain" tracking="tracking-[-0.15px]" />
          <Field text="ENTRE CALLE" variant="active" tone="text-[#999]" />
          <Field text="Y CALLE" variant="plain" tone="text-[#999]" tracking="tracking-[-0.2px]" />
          <Field text="25.445268462581385" variant="locked" tracking="tracking-[-1.18px]" />
          <Field text=" -100.98017211008484" variant="locked" tracking="tracking-[-1.55px]" />
        </div>
        <MapPanel />
      </div>
    </main>
  );
}

export default function App() {
  return (
    <div className="h-[1600px] w-[2560px] overflow-hidden bg-white font-['Lato',sans-serif]">
      <Toolbar />
      <TabBar />
      <div className="flex">
        <Sidebar />
        <MainContent />
      </div>
    </div>
  );
}
